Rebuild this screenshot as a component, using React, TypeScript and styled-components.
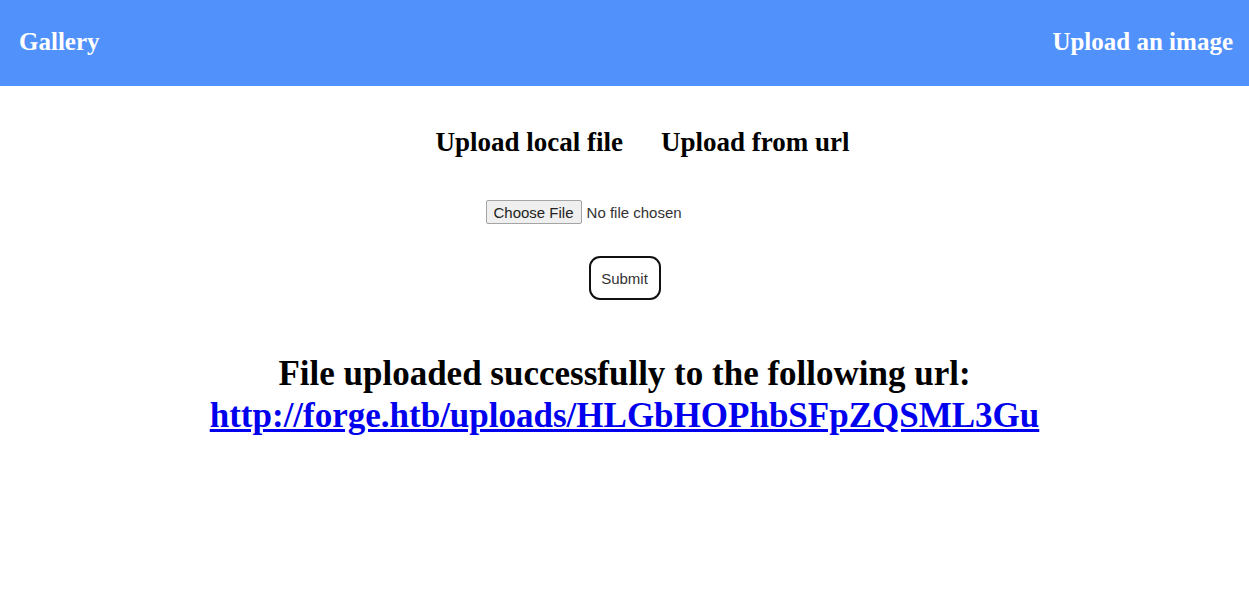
import React from 'react';
import styled, { createGlobalStyle } from 'styled-components';

const GlobalStyle = createGlobalStyle`
  body {
    margin: 0;
    background: #fff;
    color: #000;
    font-family: "Liberation Serif", "Times New Roman", serif;
  }
`;

const Header = styled.header`
  background: #5191fb;
  padding: 26px 16px 28px 19px;
`;

const Nav = styled.nav`
  display: flex;
  justify-content: space-between;
  align-items: center;
`;

const TextLink = styled.a<{ $light?: boolean }>`
  color: ${({ $light }) => ($light ? '#fff' : '#000')};
  font-size: ${({ $light }) => ($light ? 25 : 27)}px;
  line-height: 32px;
  font-weight: bold;
  text-decoration: none;
`;

const Main = styled.main`
  display: flex;
  flex-direction: column;
  align-items: center;
  padding: 40px 16px;
`;

const Tabs = styled.nav`
  display: flex;
  gap: 38px;
  padding-left: 36px;
`;

const UploadForm = styled.form`
  display: flex;
  flex-direction: column;
  align-items: center;
  gap: 32px;
  margin-top: 42px;
`;

const FileInput = styled.input`
  width: 278px;
  height: 24px;
  color: #333;
  font-family: "Liberation Sans", Arial, sans-serif;
  font-size: 15px;

  &::file-selector-button {
    height: 24px;
    margin: 0 5px 0 0;
    padding: 0 7px;
    border: 1px solid #a4a4a4;
    border-radius: 2px;
    background: #efefef;
    color: #222;
    font: inherit;
  }
`;

const SubmitButton = styled.button`
  width: 72px;
  height: 44px;
  padding: 0;
  border: 2px solid #111;
  border-radius: 11px;
  background: #fff;
  color: #333;
  font-family: "Liberation Sans", Arial, sans-serif;
  font-size: 15px;
`;

const Message = styled.h1`
  margin: 53px 0 0;
  font-size: 35px;
  line-height: 42px;
  text-align: center;
`;

const ResultLink = styled.a`
  color: #0000ee;
`;

export default function App() {
  return (
    <>
      <GlobalStyle />
      <Header>
        <Nav aria-label="Main">
          <TextLink $light href="#gallery">Gallery</TextLink>
          <TextLink $light href="#upload">Upload an image</TextLink>
        </Nav>
      </Header>
      <Main>
        <Tabs aria-label="Upload method">
          <TextLink href="#local">Upload local file</TextLink>
          <TextLink href="#remote">Upload from url</TextLink>
        </Tabs>
        <UploadForm onSubmit={(event) => event.preventDefault()}>
          <FileInput type="file" name="file" aria-label="Image file" />
          <SubmitButton type="submit">Submit</SubmitButton>
        </UploadForm>
        <Message>
          File uploaded successfully to the following url:
          <br />
          <ResultLink href="#uploaded">http://forge.htb/uploads/HLGbHOPhbSFpZQSML3Gu</ResultLink>
        </Message>
      </Main>
    </>
  );
}
